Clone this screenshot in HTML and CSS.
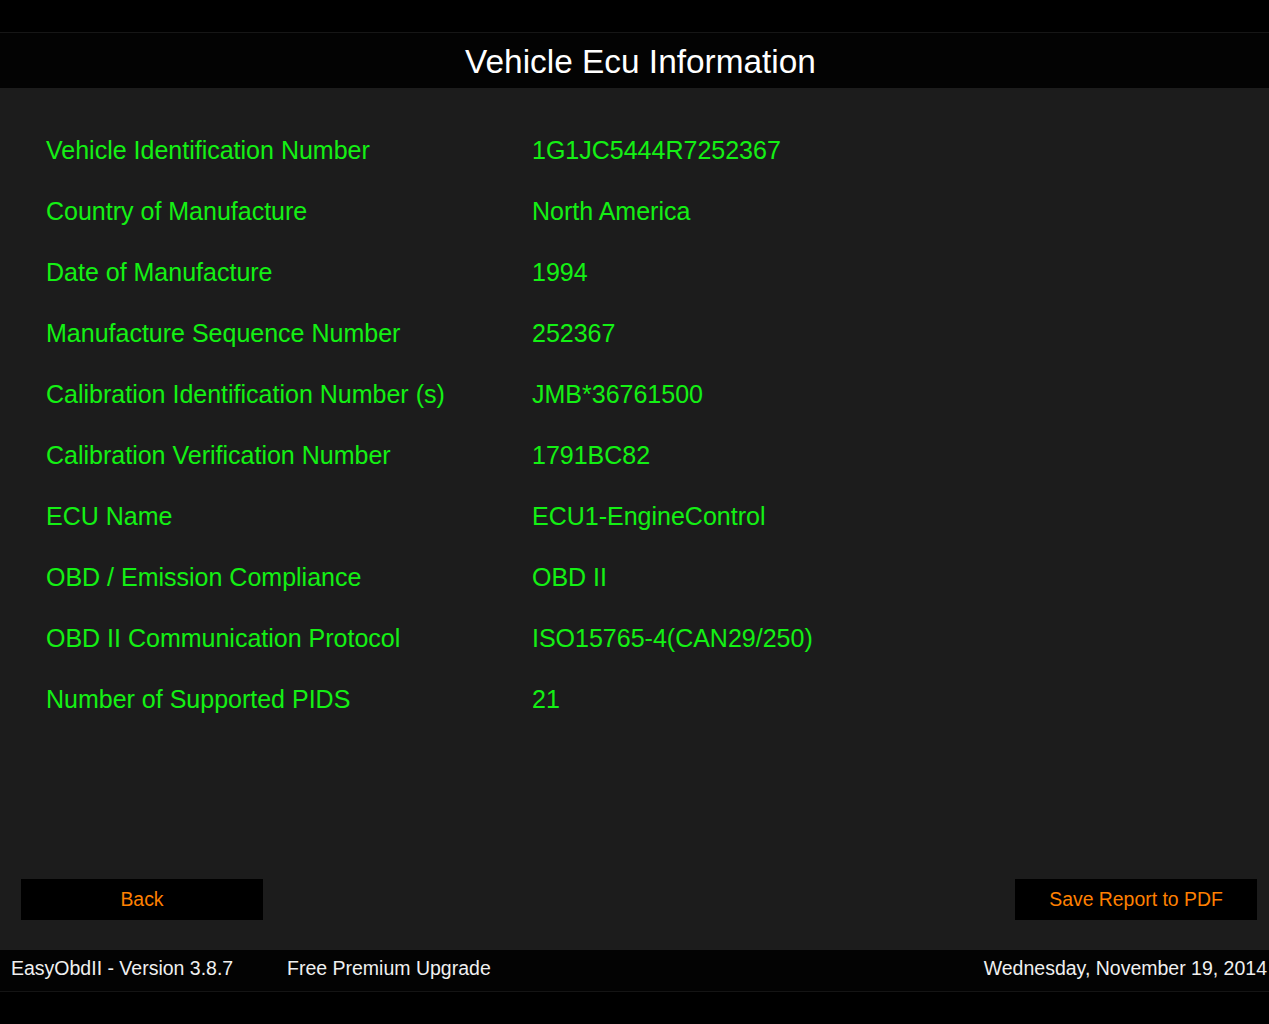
FILE: index.html
```html
<!DOCTYPE html>
<html>
<head>
<meta charset="utf-8">
<link rel="stylesheet" href="styles.css">
</head>
<body>
<div class="topbar"></div>
<div class="header"><h1 class="title">Vehicle Ecu Information</h1></div>
<main class="content">
  <div class="rows">
    <div class="row"><span class="label">Vehicle Identification Number</span><span class="value">1G1JC5444R7252367</span></div>
    <div class="row"><span class="label">Country of Manufacture</span><span class="value">North America</span></div>
    <div class="row"><span class="label">Date of Manufacture</span><span class="value">1994</span></div>
    <div class="row"><span class="label">Manufacture Sequence Number</span><span class="value">252367</span></div>
    <div class="row"><span class="label">Calibration Identification Number (s)</span><span class="value">JMB*36761500</span></div>
    <div class="row"><span class="label">Calibration Verification Number</span><span class="value">1791BC82</span></div>
    <div class="row"><span class="label">ECU Name</span><span class="value">ECU1-EngineControl</span></div>
    <div class="row"><span class="label">OBD / Emission Compliance</span><span class="value">OBD II</span></div>
    <div class="row"><span class="label">OBD II Communication Protocol</span><span class="value">ISO15765-4(CAN29/250)</span></div>
    <div class="row"><span class="label">Number of Supported PIDS</span><span class="value">21</span></div>
  </div>
  <div class="buttons">
    <button class="btn">Back</button>
    <button class="btn">Save Report to PDF</button>
  </div>
</main>
<footer class="footer">
  <span class="version">EasyObdII - Version 3.8.7</span>
  <span class="upgrade">Free Premium Upgrade</span>
  <span class="date">Wednesday, November 19, 2014</span>
</footer>
<div class="bottom"></div>
</body>
</html>
```
FILE: styles.css
```css
html, body {
  margin: 0;
  padding: 0;
  background: #000;
  font-family: "Liberation Sans", Arial, sans-serif;
}
.topbar {
  height: 32px;
  background: #000;
  border-bottom: 1px solid #161616;
}
.header {
  height: 55px;
  background: #030303;
  display: flex;
  align-items: center;
  justify-content: center;
  padding: 2px 0 0 12px;
  box-sizing: border-box;
}
.title {
  margin: 0;
  font-weight: normal;
  font-size: 33.4px;
  color: #fff;
}
.content {
  height: 862px;
  background: #1c1c1c;
  display: flex;
  flex-direction: column;
  justify-content: space-between;
  box-sizing: border-box;
  padding: 32px 12px 30px 21px;
}
.rows {
  display: flex;
  flex-direction: column;
  padding-left: 25px;
}
.row {
  height: 61px;
  display: flex;
  align-items: center;
  font-size: 25px;
  color: #14f014;
}
.label {
  width: 486px;
}
.buttons {
  display: flex;
  justify-content: space-between;
}
.btn {
  width: 242px;
  height: 41px;
  background: #000;
  border: none;
  color: #ff8000;
  font-family: "Liberation Sans", Arial, sans-serif;
  font-size: 19.4px;
  padding: 0;
}
.footer {
  height: 42px;
  background: #030303;
  border-bottom: 1px solid #141414;
  display: flex;
  align-items: center;
  color: #f0f0f0;
  font-size: 19.5px;
  padding: 0 2px 4px 11px;
  box-sizing: border-box;
}
.version {
  width: 276px;
}
.date {
  margin-left: auto;
}
.bottom {
  height: 32px;
  background: #000;
}
```
